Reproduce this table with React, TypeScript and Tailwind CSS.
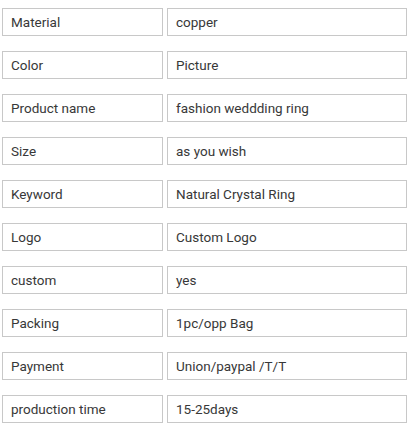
import React from "react";

const rows: [string, string][] = [
  ["Material", "copper"],
  ["Color", "Picture"],
  ["Product name", "fashion weddding ring"],
  ["Size", "as you wish"],
  ["Keyword", "Natural Crystal Ring"],
  ["Logo", "Custom Logo"],
  ["custom", "yes"],
  ["Packing", "1pc/opp Bag"],
  ["Payment", "Union/paypal /T/T"],
  ["production time", "15-25days"],
];

export default function App() {
  return (
    <div
      className="w-[409px] h-[428px] bg-white pl-[2px] pt-[8px] flex flex-col gap-[15px] text-[13.5px] text-[#383838]"
      style={{ fontFamily: "Roboto, Arial, sans-serif" }}
    >
      {rows.map(([k, v]) => (
        <div key={k} className="flex gap-[4px]">
          <div className="w-[161px] h-[28px] border border-[#c8c8c8] flex items-center pl-[8px]">
            {k}
          </div>
          <div className="w-[240px] h-[28px] border border-[#c8c8c8] flex items-center pl-[8px]">
            {v}
          </div>
        </div>
      ))}
    </div>
  );
}
